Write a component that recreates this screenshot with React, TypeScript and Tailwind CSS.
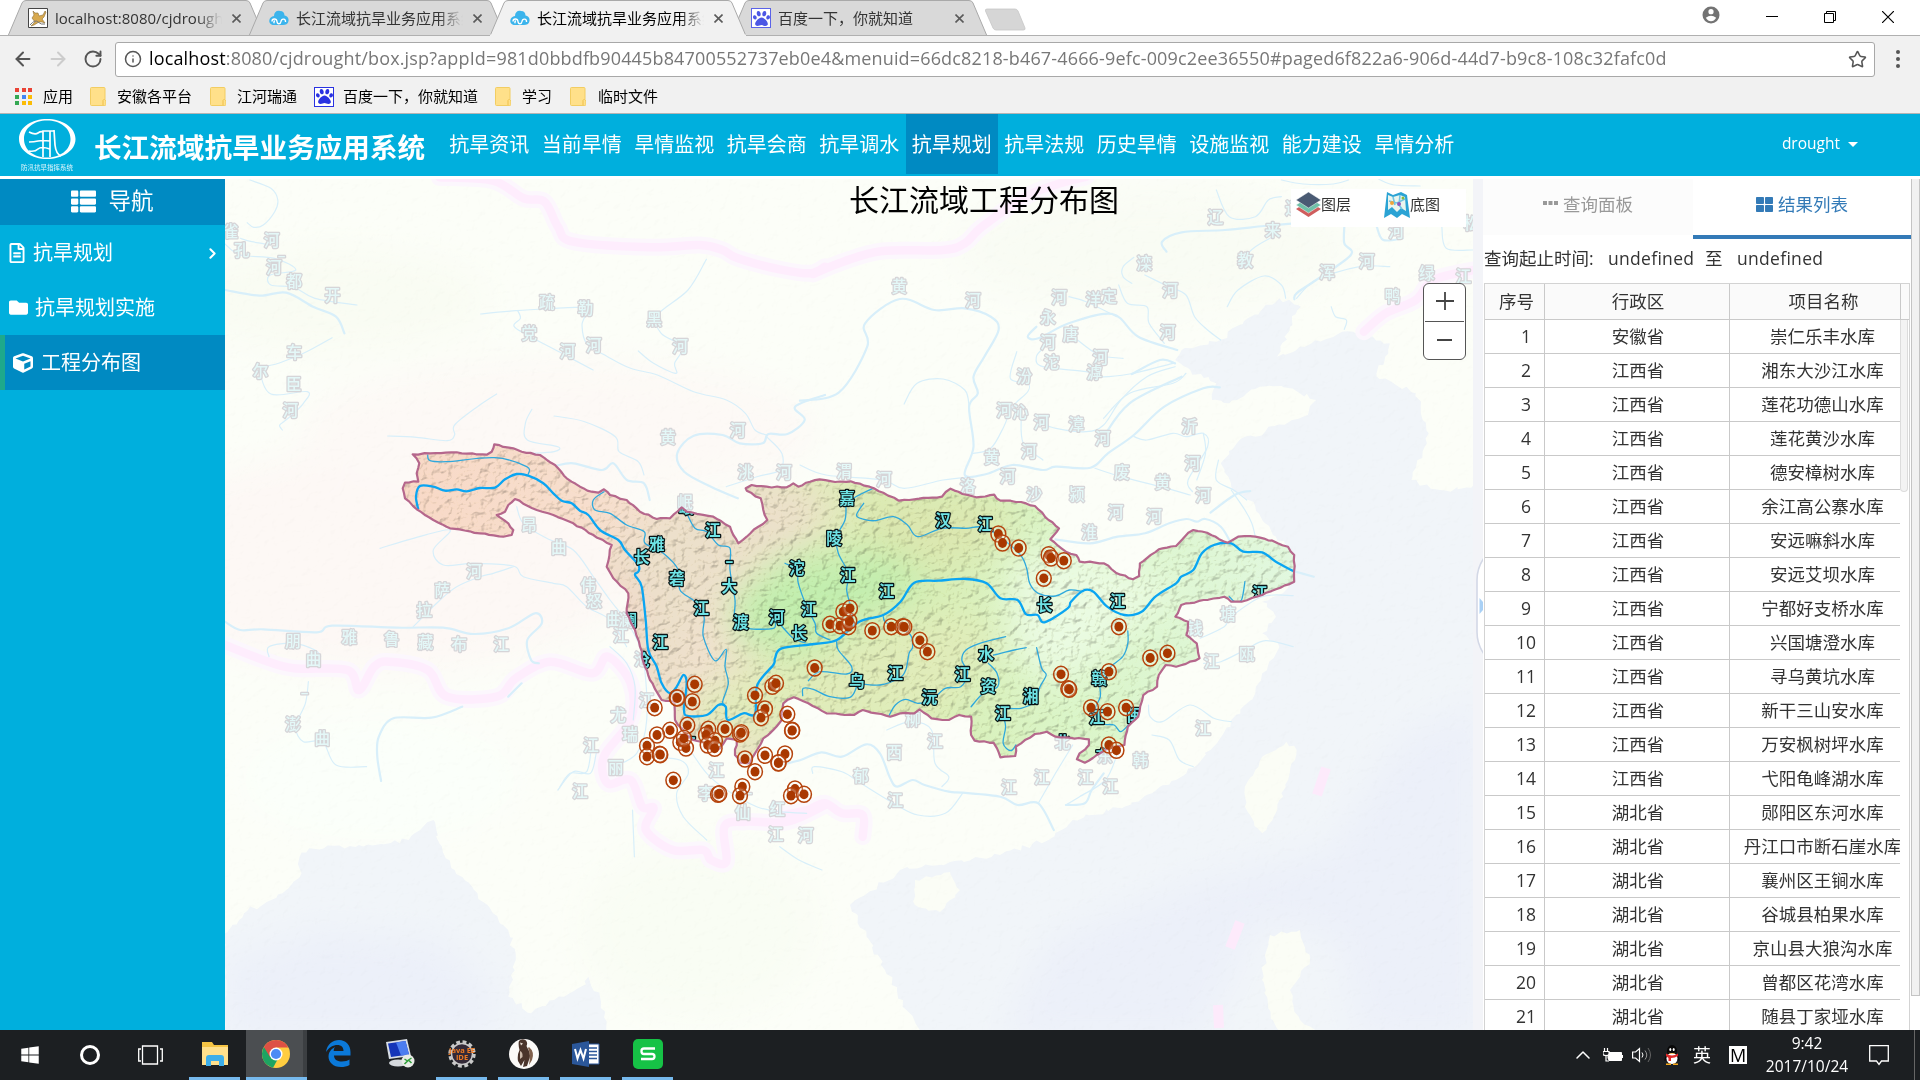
import React from "react";
import { FaThList, FaRegFileAlt, FaFolder, FaCube, FaThLarge, FaPaw, FaWindows } from "react-icons/fa";
import { ArrowLeft, ArrowRight, RotateCw, Info, Star, ChevronRight, ChevronUp } from "lucide-react";

type Pt = [number, number];
type Frame = { x: number; y: number; sx: number; sy: number };
const A: Frame = { x: 380, y: 420, sx: 1 / 3, sy: 1 / 3 };
const B: Frame = { x: 780, y: 420, sx: 0.3444, sy: 1 / 3 };
const C: Frame = { x: 225, y: 170, sx: 0.38265, sy: 1 / 3 };
const D: Frame = { x: 800, y: 170, sx: 0.43367, sy: 1 / 3 };
const E: Frame = { x: 225, y: 560, sx: 0.38265, sy: 1 / 3 };
const P: Frame = { x: 0, y: 0, sx: 1, sy: 1 };

function pts(f: Frame, s: string): Pt[] {
  return s
    .trim()
    .split(/\s+/)
    .map((p) => {
      const [a, b] = p.split(",").map(Number);
      return [f.x + a * f.sx, f.y + b * f.sy] as Pt;
    });
}
const n = (v: number) => v.toFixed(1);
const poly = (p: Pt[]) => "M" + p.map((q) => n(q[0]) + " " + n(q[1])).join("L") + "Z";
function smooth(p: Pt[]) {
  let d = `M${n(p[0][0])} ${n(p[0][1])}`;
  for (let i = 0; i < p.length - 1; i++) {
    const a = p[i - 1] || p[i];
    const b = p[i];
    const c = p[i + 1];
    const e = p[i + 2] || c;
    d += `C${n(b[0] + (c[0] - a[0]) / 6)} ${n(b[1] + (c[1] - a[1]) / 6)} ${n(c[0] - (e[0] - b[0]) / 6)} ${n(c[1] - (e[1] - b[1]) / 6)} ${n(c[0])} ${n(c[1])}`;
  }
  return d;
}
/* Adds small deterministic wiggles so that coast and basin lines look natural. */
function rough(p: Pt[], amp: number): Pt[] {
  const out: Pt[] = [];
  let k = 1;
  for (let i = 0; i < p.length; i++) {
    const a = p[i];
    const b = p[(i + 1) % p.length];
    const len = Math.hypot(b[0] - a[0], b[1] - a[1]);
    const m = Math.max(1, Math.round(len / 5));
    for (let j = 0; j < m; j++) {
      k = (k * 9301 + 49297) % 233280;
      const r = (k / 233280 - 0.5) * amp;
      k = (k * 9301 + 49297) % 233280;
      const q = (k / 233280 - 0.5) * amp;
      out.push([a[0] + ((b[0] - a[0]) * j) / m + (j ? r : 0), a[1] + ((b[1] - a[1]) * j) / m + (j ? q : 0)]);
    }
  }
  return out;
}

const basin = poly(
  rough(
    [
      ...pts(A, "98,103 150,100 230,97 320,104 335,95 343,73 400,85 425,95 480,105 525,135 560,175 600,200 635,215 655,218 672,208 690,225 740,240 780,275 830,297 870,295 905,262 920,275 1000,290 1050,320 1060,345 1075,370 1100,350 1135,320 1162,300 1150,270 1142,235 1100,212 1097,205 1115,195 1160,200 1220,202 1240,190 1255,200 1290,185"),
      ...pts(B, "115,178 160,186 205,184 260,200 300,218 345,242 390,238 470,230 495,206 530,222 570,232 622,224 640,242 700,246 740,258 780,300 810,325 785,358 830,395 860,405 870,425 940,430 975,458 1025,478 1043,468 1045,430 1100,388 1150,378 1175,350 1200,330 1240,338 1300,368 1330,350 1380,350 1430,362 1475,380 1493,405 1493,485 1440,508 1400,525 1340,545 1310,545 1290,530 1230,540 1165,555 1148,590 1185,605 1180,645 1210,670 1218,715 1190,725 1150,740 1120,735 1100,765 1095,800 1055,825 1040,890 1010,920 1000,975 950,985 920,1005 885,1028 862,1018 870,1000 897,975 897,958 840,953 800,950 775,935 740,942 700,970 685,980 683,1008 640,1012 630,985 620,968 565,962 555,945 555,890 520,885 490,900 440,895 405,868 390,880 350,880 320,890 280,880 240,870 215,885 135,880 95,858 40,832"),
      ...pts(A, "1210,850 1205,900 1180,930 1150,955 1125,1000 1110,1030 1080,1028 1065,1005 1070,960 1040,955 1020,985 1000,995 980,970 940,960 915,940 885,900 883,845 845,840 810,780 795,740 780,680 765,630 740,580 745,520 700,475 680,440 695,375 640,345 580,310 520,285 470,270 405,237 385,255 375,275 350,285 385,310 400,330 395,345 370,350 300,340 210,325 160,300 110,268 75,235 68,205 75,188 115,185 110,160 118,130"),
    ],
    1.4
  )
);

const mainRiver = smooth([
  ...pts(A, "115,268 108,230 120,198 160,200 195,212 230,208 260,214 300,204 345,203 375,178 410,162 445,167 490,190 520,220 545,242 575,250 600,272 625,285 660,330 715,360 735,390 775,435 775,455 765,465 785,500 797,600 805,690 830,740 845,790 870,820 890,800 910,765 920,790 912,870 925,888 980,885 1015,855 1037,860 1043,900 1090,880 1125,882 1132,795 1180,735 1185,715 1205,685"),
  ...pts(B, "100,672 165,660 230,605 300,585 350,545 390,488 460,482 540,477 600,490 640,535 690,540 715,583 748,585 768,607 835,565 845,545 880,512 910,515 950,560 1000,585 1050,575 1090,530 1150,490 1165,470 1200,450 1225,400 1260,375 1310,370 1345,395 1400,397 1440,425 1490,453"),
]);

const innerRivers: [Frame, string][] = [
  [A, "445,162 440,140 345,113 200,125 150,122 143,105"],
  [A, "672,215 640,240 645,270 690,280 740,315 793,335 795,370 850,400 895,450 900,510 945,545 972,590 970,650 1005,722 1038,688 1035,740 1045,790 1028,845 1037,860"],
  [A, "920,280 945,325 980,335 1015,375 1050,385 1050,450 1065,540 1065,600 1105,625 1180,625 1190,605 1240,655 1275,668"],
  [A, "1215,430 1250,450 1255,490 1280,560 1305,610 1310,640 1350,660"],
  [A, "1398,250 1395,300 1370,350 1375,400 1405,460 1400,510 1412,560 1420,610"],
  [A, "1370,665 1375,690 1415,740 1400,762 1320,755 1285,782"],
  [A, "1268,827 1270,805 1300,808 1350,830 1410,832 1430,800"],
  [B, "190,255 220,230 270,205"],
  [B, "243,250 222,285 240,297 275,302 330,290 370,315 400,350 470,325 540,325 600,325 690,395 715,440 725,490 750,520 800,528 840,510 880,515"],
  [B, "220,790 290,795 345,775 365,750 375,700 385,680 375,640 310,610 300,590"],
  [B, "315,890 335,855 365,838 400,850 440,840 480,805 525,800 545,760 528,720 540,690 580,670 655,650"],
  [B, "620,705 680,690 715,683"],
  [B, "605,730 630,760 632,800 590,820 555,860"],
  [B, "745,683 760,745 773,765 755,800 740,845 700,865 650,870 655,920 648,970 670,992 685,975"],
  [B, "1010,633 1010,670 995,710 955,745 930,790 930,830 915,870 930,910 970,915 990,935 1020,905"],
  [B, "1350,485 1340,540 1320,545 1305,530"],
];

const outerThin: [Frame, string][] = [
  [C, "65,30 120,55 138,90 130,125 100,165 75,172 58,158"],
  [C, "0,222 40,255 130,265 185,300 118,315 120,345 180,352 235,385 345,405"],
  [C, "40,205 70,215 120,225"],
  [C, "280,503 205,550 140,580 95,600 120,672 215,665 205,700 165,745 143,765 150,780"],
  [C, "668,432 760,422 840,417 940,415 933,465 945,520 1000,560 1060,595 1130,615 1225,665 1310,690 1360,730 1385,780 1415,795"],
  [C, "765,422 772,445 755,468 790,495 880,550 962,600"],
  [C, "1258,268 1210,360 1130,435 1140,490 1195,530 1175,580 1178,610 1120,580 1080,543"],
  [C, "425,798 500,802 580,812 600,795 600,765 660,710 710,672"],
  [C, "802,718 785,760 790,810 870,830 860,845 800,850"],
  [C, "860,738 940,755 1020,800 1030,845 1080,875 1095,915"],
  [C, "1415,800 1455,850 1450,900 1390,920 1310,950"],
  [D, "240,702 270,640 330,627 380,660 390,710"],
  [D, "770,262 745,290 745,320 765,340"],
  [D, "795,315 850,350 890,375 910,440 940,480 970,510"],
  [D, "735,345 755,400 800,410 805,460 840,520"],
  [D, "500,545 485,625 525,640 525,665 490,710 470,770 440,835 400,850"],
  [D, "510,740 515,820 560,870"],
  [D, "545,755 590,775 660,785 700,765 740,690 800,620 865,590"],
  [D, "565,530 545,560 560,590 660,605 690,620 760,612 860,580"],
  [D, "620,380 660,395 730,440"],
  [D, "640,510 690,555 745,565"],
  [D, "700,745 760,670 860,640 890,610"],
  [D, "960,60 990,140 1050,140 1080,90 1110,80"],
  [D, "985,410 1010,360 1070,318 1110,345 1120,385"],
  [D, "1025,260 1050,230 1090,200"],
  [D, "1145,385 1190,330 1290,290 1360,290"],
  [D, "1225,410 1235,440 1260,450 1255,478"],
  [D, "1480,170 1490,235 1552,240"],
  [D, "1110,30 1160,42 1230,42 1265,30"],
  [D, "1335,28 1370,45 1430,48"],
  [D, "770,800 800,810 860,790 890,800 930,790 940,830 895,930 905,965"],
  [D, "930,790 935,850 915,930"],
  [D, "680,895 740,920 830,950 900,975"],
  [D, "0,885 60,915 190,930 240,955 330,930 400,920"],
  [D, "965,870 960,930 1000,960 1030,990"],
  [B, "1310,210 1350,270 1370,310 1380,350"],
  [A, "0,385 100,355 210,330 160,390 190,435 280,430 400,438 430,470 520,490 560,500 620,560 690,600 740,680"],
  [A, "410,260 430,310 500,355 580,390 640,470 690,540 750,620 790,720 800,900 770,1000 700,1040"],
  [A, "400,440 340,460 300,470 230,500 180,540 100,620"],
  [A, "690,680 740,730 765,800 760,900"],
  [A, "540,1100 570,1060 620,1055 635,970"],
  [A, "800,1010 900,1020 925,1060 890,1120 910,1190 980,1260"],
  [A, "930,990 980,1060 1040,1110 1130,1160 1200,1175 1280,1180"],
  [B, "95,1060 100,1040 180,1055 235,1090 330,1150 400,1185 480,1180 530,1120"],
  [B, "310,930 380,905 440,930 450,1030 490,1070 470,1100"],
  [B, "1070,855 1075,890 1110,905 1190,855 1260,895 1310,905"],
  [B, "1220,655 1290,620 1310,590 1400,530 1490,527"],
  [B, "1230,730 1280,725 1350,690 1410,662 1490,680"],
  [B, "980,1000 945,1080 870,1130 830,1155"],
  [B, "850,975 800,1060 750,1150"],
  [B, "1080,945 1130,960 1160,1020 1200,1040"],
  [E, "115,290 115,260 180,250 235,270 250,290"],
  [E, "218,365 210,430 185,500 205,545 255,545 290,615 370,620"],
  [E, "1065,750 1070,890"],
  [E, "1450,860 1500,900 1560,930"],
  [E, "870,690 910,635 955,640 970,580"],
];

const outerWide: [Frame, string][] = [
  [C, "0,360 90,377 160,368 230,410 290,440 312,490"],
  [C, "865,887 910,880 985,900 1015,880 1050,930 1095,940 1110,990"],
  [C, "1340,985 1270,950 1200,905 1182,850 1225,797 1300,795 1345,820 1405,820 1420,792 1470,792 1515,750 1490,710 1568,675"],
  [D, "0,692 90,667 155,530 150,460 230,387 310,420 380,415 440,440 458,480 425,560 400,620 410,670 390,710 400,830 380,915 430,912 490,885 560,900 590,890 670,893 710,850 770,795 840,710 930,655 968,652"],
  [D, "845,245 835,215 880,187 980,180 1070,168 1140,160"],
  [D, "1255,170 1255,220 1270,255 1190,330 1145,370 1140,388"],
  [D, "1330,170 1345,210 1390,205"],
  [D, "545,470 525,500 550,505 620,460 720,432 780,500 870,540"],
  [D, "765,612 830,570 865,580"],
  [D, "700,800 760,700 880,620"],
  [B, "800,358 900,370 980,350 1060,340 1130,310 1180,297 1210,305 1235,297 1280,320 1310,370"],
  [B, "1250,278 1320,225 1365,213"],
  [E, "0,185 40,210 100,208 240,217 280,197 450,203 570,203 650,222 740,205 810,160 828,190 790,240 800,300 820,310"],
  [E, "408,663 398,590 402,530 440,475 540,473 620,440"],
  [E, "740,410 775,370"],
  [B, "0,1035 60,1020 120,997 180,1010 250,973 290,1000 320,1075 340,1100 385,1080 420,1095 490,1115 530,1118 640,1130 690,1155 750,1150 795,1230"],
  [B, "830,1155 885,1150 905,1110 940,1060"],
  [B, "1490,453 1550,470"],
];

const borders: [Frame, string][] = [
  [C, "560,22 700,32 780,85 835,95 870,170 910,215 1110,232 1240,225 1300,240 1340,265 1450,298 1530,310 1568,290"],
  [D, "30,312 100,275 190,243 330,240 380,220 420,170 520,80 600,40 660,20"],
  [E, "-10,250 100,300 180,325 320,330 350,390 390,320 430,305 530,330 580,410 710,410 760,355 850,305 960,340 1000,290 1060,370 1060,480 990,590 1000,670 1060,660 1090,740 1120,745 1100,810 1170,870 1250,870 1270,900 1310,905 1305,800 1360,785 1470,785 1568,735"],
  [B, "10,1185 80,1170 130,1150 180,1180 240,1185 240,1250"],
  [D, "1300,485 1350,430 1420,390 1460,330 1552,300"],
];

const seas = [
  poly(rough(pts(E, "0,1120 50,1060 150,1000 200,940 195,890 220,865 350,855 480,840 510,810 545,780 560,850 600,930 660,1000 700,1060 740,1110 760,1200 740,1310 800,1360 860,1320 930,1280 950,1250 980,1310 1000,1420 0,1420"), 5)),
  poly(
    rough(
      [
        ...pts(D, "1105,385 1155,410 1130,470 1100,560 1180,520 1250,485 1300,490 1360,520 1330,620 1420,670 1450,790 1410,930"),
        ...pts(P, "1440,490 1480,488 1480,1040 925,1040 885,970 850,905 900,870 950,862 1000,855"),
        ...pts(B, "780,1260 850,1200 1000,1160 1080,1120 1180,1060 1250,990 1310,900 1380,820 1400,760 1450,680 1400,640 1440,590 1400,545 1460,520 1490,480 1490,400 1440,350 1400,300 1380,260 1310,200 1280,130 1350,50"),
        ...pts(D, "1050,800 1080,770 1160,740 1190,690 1130,655 1060,650 990,700 950,690 960,640 900,600 865,570 880,540 960,515"),
      ],
      5
    )
  ),
];
const islands = [
  poly(rough(pts(B, "1470,965 1500,990 1480,1060 1430,1200 1400,1240 1350,1160 1350,1100 1400,1010"), 4)),
  poly(rough(pts(P, "1270,935 1300,930 1310,960 1290,990 1300,1020 1330,1040 1280,1040 1262,980"), 5)),
  poly(rough(pts(P, "915,880 950,872 960,890 940,912 915,905"), 4)),
];

const clearLabels: [Frame, string][] = [
  [A, "岷,919,262 江,998,332 雅,830,372 长,785,412 砻,890,474 –,1048,420 大,1048,500 江,964,565 渡,1082,608 河,1190,592 沱,1250,446 江,1286,568 长,1258,640 江,841,668 嘉,1401,234 陵,1362,354 江,1403,466 澜,748,600 沧,787,722 –,935,948"],
  [B, "江,309,515 汉,473,300 江,596,312 长,768,555 江,980,545 江,1393,520 乌,223,783 江,335,760 沅,434,832 江,530,763 水,598,702 资,605,798 湘,728,828 江,647,880 赣,927,775 江,919,893 闽,1030,887 北,822,967 东,938,1010"],
];
const fadedLabels: [Frame, string][] = [
  [C, "雀,15,183 河,122,210 孔,44,240 –,148,255 河,128,293 都,181,333 开,281,376 车,181,548 尔,93,603 臣,180,642 河,171,720 疏,841,396 勒,942,414 党,795,490 河,895,545 河,964,525 黑,1122,448 河,1190,528 黄,1158,802 河,1340,780 洮,1360,906 河,1461,906"],
  [D, "黄,229,348 河,399,390 河,598,382 洋,677,388 定,713,380 永,572,442 唐,624,492 河,572,517 沱,580,578 河,693,563 滹,679,606 汾,517,620 河,471,720 沁,508,727 河,557,758 漳,637,763 河,698,806 河,528,843 黄,442,861 河,479,918 渭,102,905 河,194,929 洛,387,948 沙,540,972 颍,639,974 废,742,906 黄,836,937 河,905,880 沂,898,770 河,930,977 滦,794,280 河,854,360 河,848,488 辽,958,142 来,1090,180 教,1027,270 浑,1215,308 河,1307,273 河,1375,183 绿,1445,310 鸭,1366,380 江,1530,320 辽,1137,115 松,1548,160"],
  [B, "河,975,277 河,1087,288 淮,898,337 钱,1205,625 塘,1301,584 江,1253,724 瓯,1355,702 西,332,996 江,450,965 柳,386,898 郁,235,1068 江,335,1140 江,665,1103 江,760,1072 江,887,1072 江,959,1100 韩,1047,1022 东,943,1008 北,820,968 江,1228,924 河,75,1245"],
  [A, "岷,915,248 昂,447,317 曲,536,383 河,283,453 萨,187,512 拉,133,570 伟,625,496 怒,642,543 曲,702,597 澜,738,600 江,722,646 沧,785,718 江,800,842 尤,715,886 瑞,750,942 江,633,975 丽,707,1043 江,600,1115 江,1009,1052 李,978,1120 仙,1088,1176 红,1192,1168 江,1187,1243 –,1105,1117"],
  [E, "朋,178,244 雅,325,232 鲁,436,237 藏,524,247 布,612,254 江,722,252 曲,231,299 –,208,398 澎,178,494 曲,254,536"],
];
const pins: Pt[] = [
  ...pts(A, "944,793 890,833 892,834 937,845 824,863 922,916 870,931 831,945 801,977 801,1010 839,1003 841,1004 901,967 918,984 912,955 985,928 978,945 1005,962 983,975 1004,985 1035,927 1080,942 1084,938 1095,1017 1125,1055 1155,1006 1215,1002 1196,1028 1195,1029 1222,883 1237,931 1236,932 1155,867 1143,893 1125,826 1177,799 1188,790 1304,744 880,1081 1014,1123 1018,1121 1087,1100 1080,1127 1245,1107 1233,1127 1272,1123 1350,613 1380,617 1405,620 1408,603 1390,575 1410,565"),
  ...pts(B, "268,632 323,620 356,620 361,621 406,661 428,695 634,342 646,369 693,384 780,404 787,414 824,422 766,475 984,620 1075,714 1125,700 955,755 816,763 837,806 840,808 903,863 951,875 1005,863 955,975 977,991"),
];

function Labels({ data, faded }: { data: [Frame, string][]; faded?: boolean }) {
  return (
    <g
      fontSize={15.5}
      fontWeight={faded ? 500 : 700}
      textAnchor="middle"
      paintOrder="stroke"
      strokeLinejoin="round"
      stroke={faded ? "#d6d5d8" : "#0a1416"}
      strokeWidth={2.6}
      fill={faded ? "#e4f8f8" : "#6fe4e6"}
    >
      {data.flatMap(([f, s], i) =>
        s.split(" ").map((t, j) => {
          const [c, x, y] = t.split(",");
          return (
            <text key={i + "-" + j} x={f.x + +x * f.sx} y={f.y + +y * f.sy + 5.7}>
              {c}
            </text>
          );
        })
      )}
    </g>
  );
}

function MapCanvas() {
  return (
    <svg className="block h-full w-full" viewBox="225 179 1248 851" preserveAspectRatio="xMinYMin slice">
      <defs>
        <clipPath id="basin">
          <path d={basin} />
        </clipPath>
        <linearGradient id="terrain" gradientUnits="userSpaceOnUse" x1="400" y1="560" x2="1300" y2="600">
          <stop offset="0" stopColor="#f8d9c7" />
          <stop offset="0.2" stopColor="#f7decd" />
          <stop offset="0.34" stopColor="#f1e1cf" />
          <stop offset="0.46" stopColor="#e0ecba" />
          <stop offset="0.6" stopColor="#d9efb8" />
          <stop offset="0.75" stopColor="#daf5c8" />
          <stop offset="1" stopColor="#e2f8e0" />
        </linearGradient>
        <filter id="relief" x="0" y="0" width="100%" height="100%" colorInterpolationFilters="sRGB">
          <feTurbulence type="fractalNoise" baseFrequency="0.12 0.14" numOctaves="4" seed="7" result="t" />
          <feDiffuseLighting in="t" surfaceScale="3" lightingColor="#fffdf0" diffuseConstant="1.3">
            <feDistantLight azimuth="225" elevation="58" />
          </feDiffuseLighting>
        </filter>
        <filter id="soft" x="-50%" y="-50%" width="200%" height="200%">
          <feGaussianBlur stdDeviation="18" />
        </filter>
      </defs>
      <rect x="225" y="179" width="1248" height="851" fill="#fcfef8" />
      <g filter="url(#soft)">
        <ellipse cx="390" cy="560" rx="260" ry="110" fill="#fdf8f5" />
        <ellipse cx="560" cy="430" rx="260" ry="70" fill="#fdf9f6" />
        <ellipse cx="330" cy="300" rx="160" ry="50" fill="#f9fcf3" />
        <ellipse cx="380" cy="780" rx="140" ry="60" fill="#fbfffa" />
        <ellipse cx="700" cy="930" rx="120" ry="90" fill="#f9fdf4" />
        <ellipse cx="1150" cy="250" rx="200" ry="60" fill="#f9fcf4" />
      </g>
      {seas.map((d, i) => (
        <path key={i} d={d} fill="#f1f5f9" />
      ))}
      <g filter="url(#soft)" fill="#ecf0f9">
        <path d="M225 960L320 930L440 940L500 1000L480 1040L225 1040Z" />
        <path d="M1480 700L1400 740L1330 850L1200 880L1050 940L1000 1040L1200 1040L1260 920L1340 940L1360 1040L1480 1040Z" />
      </g>
      {islands.map((d, i) => (
        <path key={i} d={d} fill="#fbfdf6" />
      ))}
      <rect x="225" y="179" width="1248" height="851" filter="url(#relief)" className="opacity-[0.02] mix-blend-multiply" />
      <g fill="none" strokeLinejoin="round" strokeLinecap="round">
        {borders.map(([f, s], i) => (
          <path key={"h" + i} d={smooth(pts(f, s))} stroke="#fcf7fd" strokeWidth={17} />
        ))}
        {borders.map(([f, s], i) => (
          <path key={"b" + i} d={smooth(pts(f, s))} stroke="#feedfd" strokeWidth={8.5} />
        ))}
        <path d="M1317 795L1326 768M1230 948L1240 922M1218 1005L1219 1028" stroke="#fdeafb" strokeWidth={10} strokeLinecap="butt" />
      </g>
      <g fill="none" stroke="#d8effa" strokeLinecap="round">
        {outerThin.map(([f, s], i) => (
          <path key={i} d={smooth(pts(f, s))} strokeWidth={1.2} />
        ))}
        {outerWide.map(([f, s], i) => (
          <path key={i} d={smooth(pts(f, s))} strokeWidth={2.2} />
        ))}
      </g>
      <Labels data={fadedLabels} faded />
      <g clipPath="url(#basin)">
        <rect x="390" y="430" width="920" height="350" fill="url(#terrain)" />
        <g filter="url(#soft)">
          <path d="M690 500L780 480L840 500L800 545L750 560L710 600L680 690L560 720L570 640L600 560Z" fill="#ece0cb" />
          <path d="M730 600L790 555L900 550L930 590L860 620L800 660L740 640Z" fill="#c2eeaf" />
          <path d="M850 495L1000 500L1010 540L930 570L870 545Z" fill="#dce7b0" />
          <path d="M680 700L860 640L960 610L1000 640L940 720L760 720L700 740Z" fill="#e0ecba" />
          <path d="M1010 560L1080 540L1180 590L1120 640L1060 690L1010 650Z" fill="#eafbe2" />
          <path d="M540 560L640 580L640 690L560 700Z" fill="#f2d9cb" />
        </g>
        <rect x="390" y="430" width="920" height="350" filter="url(#relief)" className="opacity-35 mix-blend-multiply" />
        <g fill="none" stroke="#2fa8dc" strokeWidth={1.3} strokeLinecap="round">
          {innerRivers.map(([f, s], i) => (
            <path key={i} d={smooth(pts(f, s))} />
          ))}
        </g>
        <path d={mainRiver} fill="none" stroke="#0aa5f2" strokeWidth={2.3} strokeLinejoin="round" />
        <Labels data={clearLabels} />
      </g>
      <path d={basin} fill="none" stroke="#b5678c" strokeWidth={2.2} strokeLinejoin="round" />
      {pins.map(([x, y], i) => (
        <g key={i}>
          <ellipse cx={x} cy={y} rx={7.4} ry={8} fill="#fff" fillOpacity={0.25} stroke="#b5430c" strokeWidth={1.5} />
          <ellipse cx={x} cy={y} rx={4.5} ry={4.9} fill="#a93800" />
        </g>
      ))}
    </svg>
  );
}

function Cloud() {
  return (
    <svg className="h-[17px] w-5 shrink-0" viewBox="0 0 20 17">
      <path d="M5 6C5 2 8 0 11 1c3 0 4.500 2 4.500 4.500C18.500 6 20 8.500 19.500 11c-.5 3-3 4-5.500 4H5C2 15 0 13 .3 10.500.5 8 2.500 6.300 5 6Z" fill="#3bb4ec" />
      <path d="M3 11.500c0-3 4.500-3.500 5 0 .3 3 3.500 3 4 0 .5-3.500 5-3 4.500.5M5.500 13c-1-.5-.7-2 .5-2" fill="none" stroke="#fff" strokeWidth="1.400" />
    </svg>
  );
}

function Paw({ soft }: { soft?: boolean }) {
  return (
    <span className={soft ? "flex h-5 w-5 shrink-0 items-center justify-center border border-[#5b63e8] bg-white text-[#4c57e4]" : "flex h-5 w-5 shrink-0 items-center justify-center border border-[#2932e1] bg-white text-[#2932e1]"}>
      <FaPaw size={17} />
    </span>
  );
}

function Tab({ icon, title, active, last }: { icon: React.ReactNode; title: string; active?: boolean; last?: boolean }) {
  return (
    <div className={active ? "relative z-10 -mr-[15px] h-9 w-[256px] shrink-0" : "relative -mr-[15px] h-9 w-[256px] shrink-0"}>
      <svg className="absolute inset-0 h-full w-full" viewBox="0 0 256 36">
        <path d="M0 36L14 3Q15 .5 18 .5H238Q241 .5 242 3L256 36Z" fill={active ? "#f1f1f1" : "#d9d9d9"} stroke="#a9a9a9" />
        {active ? <path d="M0 35.500H256" stroke="#f1f1f1" strokeWidth="2" /> : <path d="M0 35.500H256" stroke="#b0b0b0" />}
      </svg>
      <div className="relative flex h-9 items-center pl-5">
        {icon}
        <span className={last ? "ml-[7px] w-[167px] overflow-hidden whitespace-nowrap text-[15px] text-[#333]" : active ? "ml-[7px] w-[167px] overflow-hidden whitespace-nowrap text-[15px] text-black [mask-image:linear-gradient(to_right,#000_85%,transparent)]" : "ml-[7px] w-[167px] overflow-hidden whitespace-nowrap text-[15px] text-[#333] [mask-image:linear-gradient(to_right,#000_85%,transparent)]"}>{title}</span>
        <svg className="ml-[10px] h-[9px] w-[9px] shrink-0" viewBox="0 0 9 9">
          <path d="M.5.500l8 8M8.500.500l-8 8" stroke="#5a5a5a" strokeWidth="1.600" />
        </svg>
      </div>
    </div>
  );
}

function Folder() {
  return (
    <svg className="h-[19px] w-4 shrink-0" viewBox="0 0 16 19">
      <path d="M.5 1.500Q.5.500 1.500.500H14q1 0 1 1v11l.8 1.500v3.500q0 1-1 1H1.500q-1 0-1-1Z" fill="#ffe08a" stroke="#f2cd62" />
      <path d="M13 18v-4.500l1.500-1.500" fill="none" stroke="#eec04a" />
    </svg>
  );
}

const names: [string, string][] = [
  ["安徽省", "崇仁乐丰水库"], ["江西省", "湘东大沙江水库"], ["江西省", "莲花功德山水库"], ["江西省", "莲花黄沙水库"], ["江西省", "德安樟树水库"],
  ["江西省", "余江高公寨水库"], ["江西省", "安远嘛斜水库"], ["江西省", "安远艾坝水库"], ["江西省", "宁都好支桥水库"], ["江西省", "兴国塘澄水库"],
  ["江西省", "寻乌黄坑水库"], ["江西省", "新干三山安水库"], ["江西省", "万安枫树坪水库"], ["江西省", "弋阳龟峰湖水库"], ["湖北省", "郧阳区东河水库"],
  ["湖北省", "丹江口市断石崖水库"], ["湖北省", "襄州区王锏水库"], ["湖北省", "谷城县柏果水库"], ["湖北省", "京山县大狼沟水库"], ["湖北省", "曾都区花湾水库"], ["湖北省", "随县丁家垭水库"],
];
const nav = ["抗旱资讯", "当前旱情", "旱情监视", "抗旱会商", "抗旱调水", "抗旱规划", "抗旱法规", "历史旱情", "设施监视", "能力建设", "旱情分析"];
const dots = ["#ea4335", "#ea4335", "#ea4335", "#34a853", "#4285f4", "#fbbc05", "#34a853", "#fbbc05", "#fbbc05"];

function Browser() {
  return (
    <div className="h-[114px] shrink-0 border-b border-[#b4b4b4] bg-[#f1f1f1]">
      <div className="flex h-9 border-b border-[#b0b0b0] bg-white pl-[8px]">
        <Tab
          title="localhost:8080/cjdrought"
          icon={
            <svg className="h-5 w-5 shrink-0" viewBox="0 0 20 20">
              <path d="M.5.500h19v19H.500Z" fill="#fff" stroke="#444" />
              <path d="M5 3l2 2 3 0 1 3 4-1 2-4 1 1-2 5-2 2 3 4-3-1-3 0-5 3-3 1 4-4-3-4 2-3Z" fill="#d8a94e" stroke="#8b6f37" strokeWidth=".6" />
              <path d="M2 17q5-6 8-3t7 2" stroke="#777" fill="none" />
            </svg>
          }
        />
        <Tab title="长江流域抗旱业务应用系统" icon={<Cloud />} />
        <Tab title="长江流域抗旱业务应用系统" icon={<Cloud />} active />
        <Tab title="百度一下，你就知道" icon={<Paw soft />} last />
        <svg className="ml-3 mt-2 h-[23px] w-[43px] shrink-0" viewBox="0 0 43 23">
          <path d="M3 1H31q2 0 3 2l7 17q.5 2-1.500 2H12q-2 0-3-2L1.500 3Q1 1 3 1Z" fill="#d6d6d6" stroke="#c6c6c6" strokeWidth=".8" />
        </svg>
        <div className="flex flex-1 items-start justify-end gap-[46px] pr-[26px]">
          <svg className="mt-1.5 h-[18px] w-[18px]" viewBox="0 0 18 18">
            <circle cx="9" cy="9" r="8.500" fill="#737373" />
            <circle cx="9" cy="5.700" r="2.600" fill="#fff" />
            <path d="M3.800 11.800Q9 7.500 14.200 11.800Q12 15.300 9 15.300T3.800 11.800Z" fill="#fff" />
          </svg>
          <svg className="mt-[11px] h-3 w-3" viewBox="0 0 12 12"><path d="M0 5.500H12" stroke="#000" /></svg>
          <svg className="mt-[11px] h-3 w-3" viewBox="0 0 12 12"><path d="M.5 2.500h9v9h-9ZM2.500 2.500v-2h9v9h-2" fill="none" stroke="#000" /></svg>
          <svg className="mt-[11px] h-3 w-3" viewBox="0 0 12 12"><path d="M0 0L12 12M12 0L0 12" stroke="#000" strokeWidth="1.200" /></svg>
        </div>
      </div>
      <div className="flex h-[46px] items-center pl-3 pr-[17px]">
        <ArrowLeft size={22} strokeWidth={2.2} className="text-[#555]" />
        <ArrowRight size={22} strokeWidth={2.2} className="ml-[13px] text-[#ccc]" />
        <RotateCw size={20} strokeWidth={2.3} className="ml-[14px] text-[#555]" />
        <div className="ml-3 flex h-[35px] w-[1760px] items-center rounded-[3px] border border-[#a8a8a8] bg-white pl-2 pr-[7px]">
          <Info size={18} strokeWidth={2} className="text-[#555]" />
          <span className="ml-[7px] flex-1 whitespace-nowrap pb-0.5 text-[18px] tracking-[0.155px] text-[#777]">
            <span className="text-black">localhost</span>:8080/cjdrought/box.jsp?appId=981d0bbdfb90445b84700552737eb0e4&amp;menuid=66dc8218-b467-4666-9efc-009c2ee36550#paged6f822a6-906d-44d7-b9c8-108c32fafc0d
          </span>
          <Star size={19} strokeWidth={2} className="text-[#555]" />
        </div>
        <div className="ml-auto flex flex-col gap-[3px] pr-[3px]">
          <i className="h-1 w-1 rounded-full bg-[#555]" />
          <i className="h-1 w-1 rounded-full bg-[#555]" />
          <i className="h-1 w-1 rounded-full bg-[#555]" />
        </div>
      </div>
      <div className="flex h-[29px] items-center pl-[15px] text-[15px] text-black">
        <div className="grid grid-cols-3 gap-[2.500px]">
          {dots.map((c, i) => (
            <i key={i} className="h-1 w-1" style={{ background: c }} />
          ))}
        </div>
        <span className="ml-[11px] mr-[17px]">应用</span>
        <Folder /><span className="ml-[11px] mr-[18px]">安徽各平台</span>
        <Folder /><span className="ml-[11px] mr-[17px]">江河瑞通</span>
        <Paw /><span className="ml-[9px] mr-[17px]">百度一下，你就知道</span>
        <Folder /><span className="ml-[11px] mr-[18px]">学习</span>
        <Folder /><span className="ml-3">临时文件</span>
      </div>
    </div>
  );
}

function Header() {
  return (
    <div className="flex h-[62px] shrink-0 items-start bg-[#00afdd] text-white">
      <svg className="ml-[18px] mt-1 h-[54px] w-[59px] shrink-0" viewBox="0 0 59 54">
        <path fillRule="evenodd" d="M29 1C44 1 57.500 9 57.500 21S44 41 29 41 1 33 1 21 14 1 29 1ZM29 2.500C16 2.500 6 10 6 21S16 39.500 29 39.500 52.500 32 52.500 21 42 2.500 29 2.500Z" fill="#fff" />
        <path d="M25 39V13h11M36 12l1 15q1 9 6 11M32 13v26M11 14q6 3 9 1t5-1M11 24q5 0 9-1t12 0M11 33q6 1 9-2t12 0" stroke="#fff" fill="none" strokeWidth="1.700" />
        <text x="29" y="51.500" textAnchor="middle" fontSize="6.500" fill="#e2f6fc" textLength="52">防汛抗旱指挥系统</text>
      </svg>
      <h1 className="ml-[17px] mt-[12px] w-[332px] whitespace-nowrap text-[27.600px] font-bold leading-[42px]">长江流域抗旱业务应用系统</h1>
      <div className="ml-[17px] flex">
        {nav.map((t, i) => (
          <div key={t} className={i === 5 ? "flex h-[60px] w-[92.500px] items-center justify-center whitespace-nowrap bg-[#008ac2] pt-0.5 text-[20px]" : "flex h-[60px] w-[92.500px] items-center justify-center whitespace-nowrap pt-0.5 text-[20px]"}>
            {t}
          </div>
        ))}
      </div>
      <div className="ml-auto mr-[62px] flex h-[60px] items-center gap-2 text-[15.500px]">
        drought
        <svg className="h-[5px] w-2.5" viewBox="0 0 10 5"><path d="M0 0H10L5 5Z" fill="#fff" /></svg>
      </div>
    </div>
  );
}

function Sidebar() {
  return (
    <div className="w-[225px] shrink-0 bg-[#00afdd] text-[20px] text-white">
      <div className="flex h-[46px] items-center justify-center gap-3 bg-[#008ac2] pb-0.5 text-[22.500px]">
        <FaThList size={25} />
        <span>导航</span>
      </div>
      <div className="flex h-[55px] items-center pl-[8px] pr-1 pt-px">
        <FaRegFileAlt size={20} className="w-[18px]" />
        <span className="ml-[7px] flex-1">抗旱规划</span>
        <ChevronRight size={17} strokeWidth={2.8} />
      </div>
      <div className="flex h-[55px] items-center pl-[9px]">
        <FaFolder size={19} />
        <span className="ml-[7px]">抗旱规划实施</span>
      </div>
      <div className="flex h-[55px] items-center border-l-[5px] border-[#1ea98b] bg-[#008ac2] pl-2 pt-px">
        <FaCube size={20} />
        <span className="ml-2">工程分布图</span>
      </div>
    </div>
  );
}

function MapArea() {
  return (
    <div className="relative w-[1248px] shrink-0 overflow-hidden">
      <MapCanvas />
      <div className="absolute left-[624px] top-px whitespace-nowrap text-[30px] leading-[40px] text-black">长江流域工程分布图</div>
      <div className="absolute left-[1066px] top-[10px] flex h-[38px] w-[175px] bg-white pl-[5px] pt-[3px] text-[15px] leading-[24px] text-[#333]">
        <svg className="h-[25px] w-[25px]" viewBox="0 0 25 25">
          <path d="M12.500 9L25 17L12.500 25L0 17Z" fill="#cf5d5d" />
          <path d="M12.500 5L25 13L12.500 21L0 13Z" fill="#6fc0a8" stroke="#fff" strokeWidth=".5" />
          <path d="M12.500 0L25 8L12.500 16L0 8Z" fill="#4a5a73" stroke="#fff" strokeWidth=".5" />
        </svg>
        <span className="mr-8 w-[31px] whitespace-nowrap">图层</span>
        <svg className="h-[26px] w-[26px]" viewBox="0 0 26 26">
          <path d="M3 0L9 3L17 0L23 3L26 26L18 22L13 26L7 22L0 26Z" fill="#2ba3d4" />
          <path d="M4 3L9 5L16 3L21 5L22 19L17 16L13 20L8 15L4 18Z" fill="#eaf5ee" />
          <path d="M9 5l2 8M16 3l-1 10 3 4M5 9l8 2 8-4" stroke="#72c4e2" strokeWidth="1.600" fill="none" />
          <circle cx="8" cy="11" r="2" fill="#f0a53a" /><circle cx="15" cy="12" r="2" fill="#9158b8" /><circle cx="19" cy="6" r="1.500" fill="#89b83c" />
        </svg>
        <span className="whitespace-nowrap">底图</span>
      </div>
      <div className="absolute left-[1198px] top-[104px] h-[77px] w-[43px] rounded-[6px] border border-[#555] bg-white px-px">
        <div className="flex h-[38px] items-center justify-center border-b border-[#555] pb-[3px]">
          <svg className="h-[18px] w-[18px]" viewBox="0 0 18 18"><path d="M0 9H18M9 0V18" stroke="#444" strokeWidth="1.800" /></svg>
        </div>
        <div className="flex h-[35px] items-center justify-center">
          <svg className="h-[2px] w-[15px]" viewBox="0 0 15 2"><path d="M0 1H15" stroke="#444" strokeWidth="2" /></svg>
        </div>
      </div>
    </div>
  );
}

function Results() {
  return (
    <div className="flex min-w-0 flex-1 bg-white">
      <div className="relative w-[10px] shrink-0 bg-[#f3f4f8]">
        <svg className="absolute bottom-0 left-0 top-[375px] h-[104px] w-[10px]" viewBox="0 0 10 104">
          <path d="M11 4Q4 14 4 26V78Q4 90 11 100Z" fill="#fff" stroke="#d3d8e6" strokeWidth="1.600" />
          <path d="M6.500 44L10 48V56L6.500 60Z" fill="#a9d0f5" />
        </svg>
      </div>
      <div className="w-[428px] shrink-0">
        <div className="flex h-[60px] text-[17.500px]">
          <div className="flex h-14 w-[210px] items-center justify-center gap-[5px] bg-[#fcfcfc] pb-[5px] text-[#999]">
            <svg className="mb-1 h-1 w-[15px]" viewBox="0 0 15 4"><path d="M0 0h4v4H0ZM5.500 0h4v4h-4ZM11 0h4v4h-4Z" fill="#999" /></svg>
            查询面板
          </div>
          <div className="flex h-[60px] w-[218px] items-center justify-center gap-[5px] border-b-4 border-[#337ab7] pb-[5px] text-[#337ab7]">
            <FaThLarge size={17} />结果列表
          </div>
        </div>
        <div className="flex h-[44px] items-start pl-px pt-1.5 text-[17.500px] leading-[26px] text-[#333]">
          <span className="w-[124px] whitespace-nowrap">查询起止时间:</span>
          <span className="w-[97px] tracking-[0.3px]">undefined</span>
          <span className="w-[32px]">至</span>
          <span className="tracking-[0.3px]">undefined</span>
        </div>
        <div className="ml-px h-[747px] w-[426px] overflow-hidden border border-b-0 border-[#d3d3d3]">
          <div className="flex text-[17.500px] text-[#333]">
            <div className="flex h-9 w-full border-b border-[#c9c9c9] bg-[#fafafa] leading-[34px]">
              <div className="w-[60px] border-r border-[#c9c9c9] pl-1 text-center">序号</div>
              <div className="w-[185px] border-r border-[#c9c9c9] pl-0.5 text-center">行政区</div>
              <div className="w-[171px] whitespace-nowrap border-r border-[#c9c9c9] pl-[17px] text-center">项目名称</div>
            </div>
          </div>
          <div className="flex">
            <div className="w-[415px] shrink-0 text-[17.500px] leading-[33px] text-[#333]">
              {names.map(([a, b], i) => (
                <div key={i} className="flex h-[34px] border-b border-[#c9c9c9]">
                  <div className="w-[60px] border-r border-[#c9c9c9] pr-2 text-right">
                    <span className={i < 9 ? "pr-[5px]" : ""}>{i + 1}</span>
                  </div>
                  <div className="w-[185px] border-r border-[#c9c9c9] pl-0.5 text-center">{a}</div>
                  <div className="flex w-[170px] justify-center overflow-hidden whitespace-nowrap pl-[15px]">{b}</div>
                </div>
              ))}
            </div>
            <div className="h-[172px] w-2 rounded-b-sm border-x border-b border-[#dcdcdc] bg-[#f3f3f3]" />
          </div>
        </div>
      </div>
      <div className="w-[9px] shrink-0">
        <div className="h-[817px] border-x border-b border-[#c4c4c4] bg-[#f1f1f1]" />
      </div>
    </div>
  );
}

function Slot({ children, line, active }: { children: React.ReactNode; line?: boolean; active?: boolean }) {
  return (
    <div className={active ? "flex h-full w-[61px] flex-col border-r-4 border-[#3c3f42] bg-[#4b4e51]" : "flex h-full w-[51px] flex-col"}>
      <div className="flex flex-1 items-center justify-center">{children}</div>
      <div className={line ? (active ? "-mr-1 h-[3px] bg-[#76b9ed]" : "h-[3px] bg-[#76b9ed]") : "h-[3px]"} />
    </div>
  );
}

function Taskbar() {
  return (
    <div className="flex h-[50px] shrink-0 items-center bg-[#1c1f22] text-white">
      <div className="flex h-full w-[189px] items-center pl-5">
        <FaWindows size={20} />
        <span className="ml-[40px] h-[20px] w-[20px] rounded-full border-[3px] border-white" />
        <svg className="ml-[38px] h-[20px] w-[25px]" viewBox="0 0 25 20">
          <path d="M4.500 1h15v18h-15ZM3 4H.7v12H3M22 4h2.300v12H22" fill="none" stroke="#fff" strokeWidth="1.300" />
        </svg>
      </div>
      <Slot line>
        <svg className="h-6 w-7" viewBox="0 0 28 24">
          <path d="M1 0h10l2 3h14v19H1Z" fill="#f5c444" />
          <path d="M1 5h26v18H1Z" fill="#ffe08c" />
          <path d="M5 24v-8q0-3 3-3h12q3 0 3 3v8h-5v-5h-8v5Z" fill="#3daee9" />
        </svg>
      </Slot>
      <div className="w-1.5" />
      <Slot line active>
        <svg className="ml-0.5 h-7 w-7" viewBox="0 0 28 28">
          <circle cx="14" cy="14" r="14" fill="#ffcd40" />
          <path d="M14 14L1.900 7A14 14 0 0 0 11 27.700L17 17Z" fill="#1da462" />
          <path d="M14 7.500H26.400A14 14 0 0 0 1.900 7L8 17Z" fill="#dd5144" />
          <circle cx="14" cy="14" r="6.500" fill="#fff" />
          <circle cx="14" cy="14" r="5.100" fill="#4c8bf5" />
        </svg>
      </Slot>
      <div className="w-[5px]" />
      <Slot>
        <svg className="h-[27px] w-[26px]" viewBox="0 0 26 27">
          <path d="M1 12C2 4 8 0 14 0C21 0 25.500 5 25.500 12V15.500H9C9 20 13 21.500 17 21.500C20 21.500 23 20.500 24.500 19.500V25C22 26.500 19 27 16 27C8 27 3.500 22 3.500 16.500C3.500 11.500 7 8.500 10 7C9 8.500 8.800 9.500 8.700 11H18.500C18.500 7 16 5 12.500 5C8 5 4 7.500 1 12Z" fill="#0b79d9" />
        </svg>
      </Slot>
      <div className="w-[11px]" />
      <Slot>
        <svg className="h-[30px] w-[30px]" viewBox="0 0 30 30">
          <ellipse cx="13" cy="24" rx="9" ry="3.500" fill="#d5d9dd" />
          <path d="M1 3L22 0L26 17L4 20Z" fill="#d8dee6" />
          <path d="M3 4.500L20.500 2L24 15.500L6 18Z" fill="#1535b8" />
          <path d="M11 3.500L20.500 2L24 15.500L16 16.600Z" fill="#4b7df0" />
          <circle cx="23" cy="22" r="6.500" fill="#e8ebe6" />
          <path d="M19.500 20l3 2-3 3M26.500 19l-3 2 3 3" stroke="#2f9e3a" fill="none" strokeWidth="1.500" />
        </svg>
      </Slot>
      <div className="w-[11px]" />
      <div className="flex h-full gap-[11px]">
        <Slot line>
          <svg className="h-[28px] w-[28px]" viewBox="0 0 28 28">
            <circle cx="14" cy="14" r="11.800" fill="none" stroke="#c9c9c9" strokeWidth="3.800" strokeDasharray="3.700 2.500" />
            <circle cx="14" cy="14" r="10.500" fill="#332a38" stroke="#c9c9c9" strokeWidth="1.500" />
            <text x="14" y="13" textAnchor="middle" fontSize="7.500" fontWeight="700" fill="#ee7a22" textLength="26">Java EE</text>
            <text x="14" y="20" textAnchor="middle" fontSize="7.500" fontWeight="700" fill="#ee7a22">IDE</text>
          </svg>
        </Slot>
        <Slot line>
          <svg className="h-[30px] w-[30px]" viewBox="0 0 30 30">
            <circle cx="15" cy="15" r="15" fill="#fbfaf8" />
            <path d="M10 2Q13-1 17 1.500Q19 4 17.500 7L20 12Q22 17 20 21L18 27L14 28L15.500 21L12 27L9 22Q8 16 10.500 11Q9 5 10 2Z" fill="#4a342b" />
            <path d="M20 8Q26 13 23 21L20 26Q22 15 19 9Z" fill="#80604c" />
            <path d="M11 12Q14 13 13.500 18L11 20Z" fill="#cbb9ab" />
            <path d="M11 3.500l3 1-2 2Z" fill="#e8ddd4" />
          </svg>
        </Slot>
        <Slot line>
          <svg className="h-[26px] w-[28px]" viewBox="0 0 28 26">
            <path d="M15 3H27V23H15Z" fill="#fff" stroke="#2b579a" />
            <path d="M17 7h8M17 10.500h8M17 14h8M17 17.500h8" stroke="#2b579a" strokeWidth="1.600" />
            <path d="M0 3L17 0V26L0 23Z" fill="#2b579a" />
            <path d="M3 8L5.500 17.500L8.500 9L11.500 17.500L14 8" fill="none" stroke="#fff" strokeWidth="2" />
          </svg>
        </Slot>
        <Slot line>
          <svg className="h-[30px] w-[30px]" viewBox="0 0 30 30">
            <rect width="30" height="30" rx="5" fill="#16c246" />
            <path d="M22 9.500H11Q8.500 9.500 8.500 12V12.500Q8.500 15 11 15H19Q21.500 15 21.500 17.500T19 20H8" fill="none" stroke="#fff" strokeWidth="2.300" />
          </svg>
        </Slot>
      </div>
      <div className="ml-auto flex h-full items-center">
        <ChevronUp size={24} strokeWidth={1.500} className="mr-[8px]" />
        <svg className="mr-[9px] h-[15px] w-5" viewBox="0 0 20 15">
          <path d="M5 4.500H18.500V12.500H5Z" fill="#fff" stroke="#fff" />
          <path d="M19.500 7v3M1.500 0v3M4.500 0v3M0 3.500H6V6Q6 7.500 3 7.500T0 6ZM3 8v5h3" stroke="#fff" fill="#1b1e22" strokeWidth="1.200" />
        </svg>
        <svg className="mr-[11px] h-4 w-[21px]" viewBox="0 0 21 16">
          <path d="M.6 5h3L7.500 1.500v13L3.600 11h-3Z" fill="none" stroke="#fff" strokeWidth="1.200" />
          <path d="M10 5.500q2 2.500 0 5" stroke="#fff" fill="none" />
          <path d="M13 3.500q3.500 4.500 0 9" stroke="#999" fill="none" />
          <path d="M16 1q5 7 0 14" stroke="#666" fill="none" />
        </svg>
        <svg className="mr-[13px] h-5 w-4" viewBox="0 0 16 20">
          <ellipse cx="8" cy="6" rx="5" ry="6" fill="#080808" />
          <path d="M3 9Q0 13 .5 16L3 15M13 9q3 4 2.500 7L13 15" fill="#080808" />
          <ellipse cx="8" cy="13.500" rx="5.500" ry="5.500" fill="#fff" />
          <ellipse cx="6.300" cy="4.500" rx="1" ry="1.500" fill="#fff" /><ellipse cx="9.700" cy="4.500" rx="1" ry="1.500" fill="#fff" />
          <path d="M4.500 7.500q3.500 2 7 0l-1 1q-2.500 1-5 0ZM2 18.500h5v1.500H2ZM9 18.500h5v1.500H9Z" fill="#f6a81c" />
          <path d="M2 8.500q6 4 12 0v2.500q-3 2-7 2v3H4.500v-3L2 11Z" fill="#e02828" />
        </svg>
        <span className="mr-[18px] text-[18px]">英</span>
        <span className="flex h-[18px] w-[18px] items-center justify-center bg-white text-[18px] text-black">M</span>
        <div className="ml-[15px] w-[90px] whitespace-nowrap text-center text-[15.500px] leading-[23px]">
          <div>9:42</div>
          <div>2017/10/24</div>
        </div>
        <svg className="ml-[17px] h-[21px] w-5" viewBox="0 0 20 21">
          <path d="M.7.700H19.300V16H12.500L10 19.300L7.500 16H.7Z" fill="none" stroke="#fff" strokeWidth="1.300" />
        </svg>
        <div className="ml-[25px] mr-[5px] h-full w-px bg-[#666]" />
      </div>
    </div>
  );
}

export default function App() {
  return (
    <div className="flex h-[1080px] w-[1920px] flex-col overflow-hidden bg-white font-['Open_Sans','Noto_Sans_CJK_SC',sans-serif] font-normal">
      <Browser />
      <Header />
      <div className="flex h-[854px] shrink-0 pt-[3px]">
        <Sidebar />
        <MapArea />
        <Results />
      </div>
      <Taskbar />
    </div>
  );
}
